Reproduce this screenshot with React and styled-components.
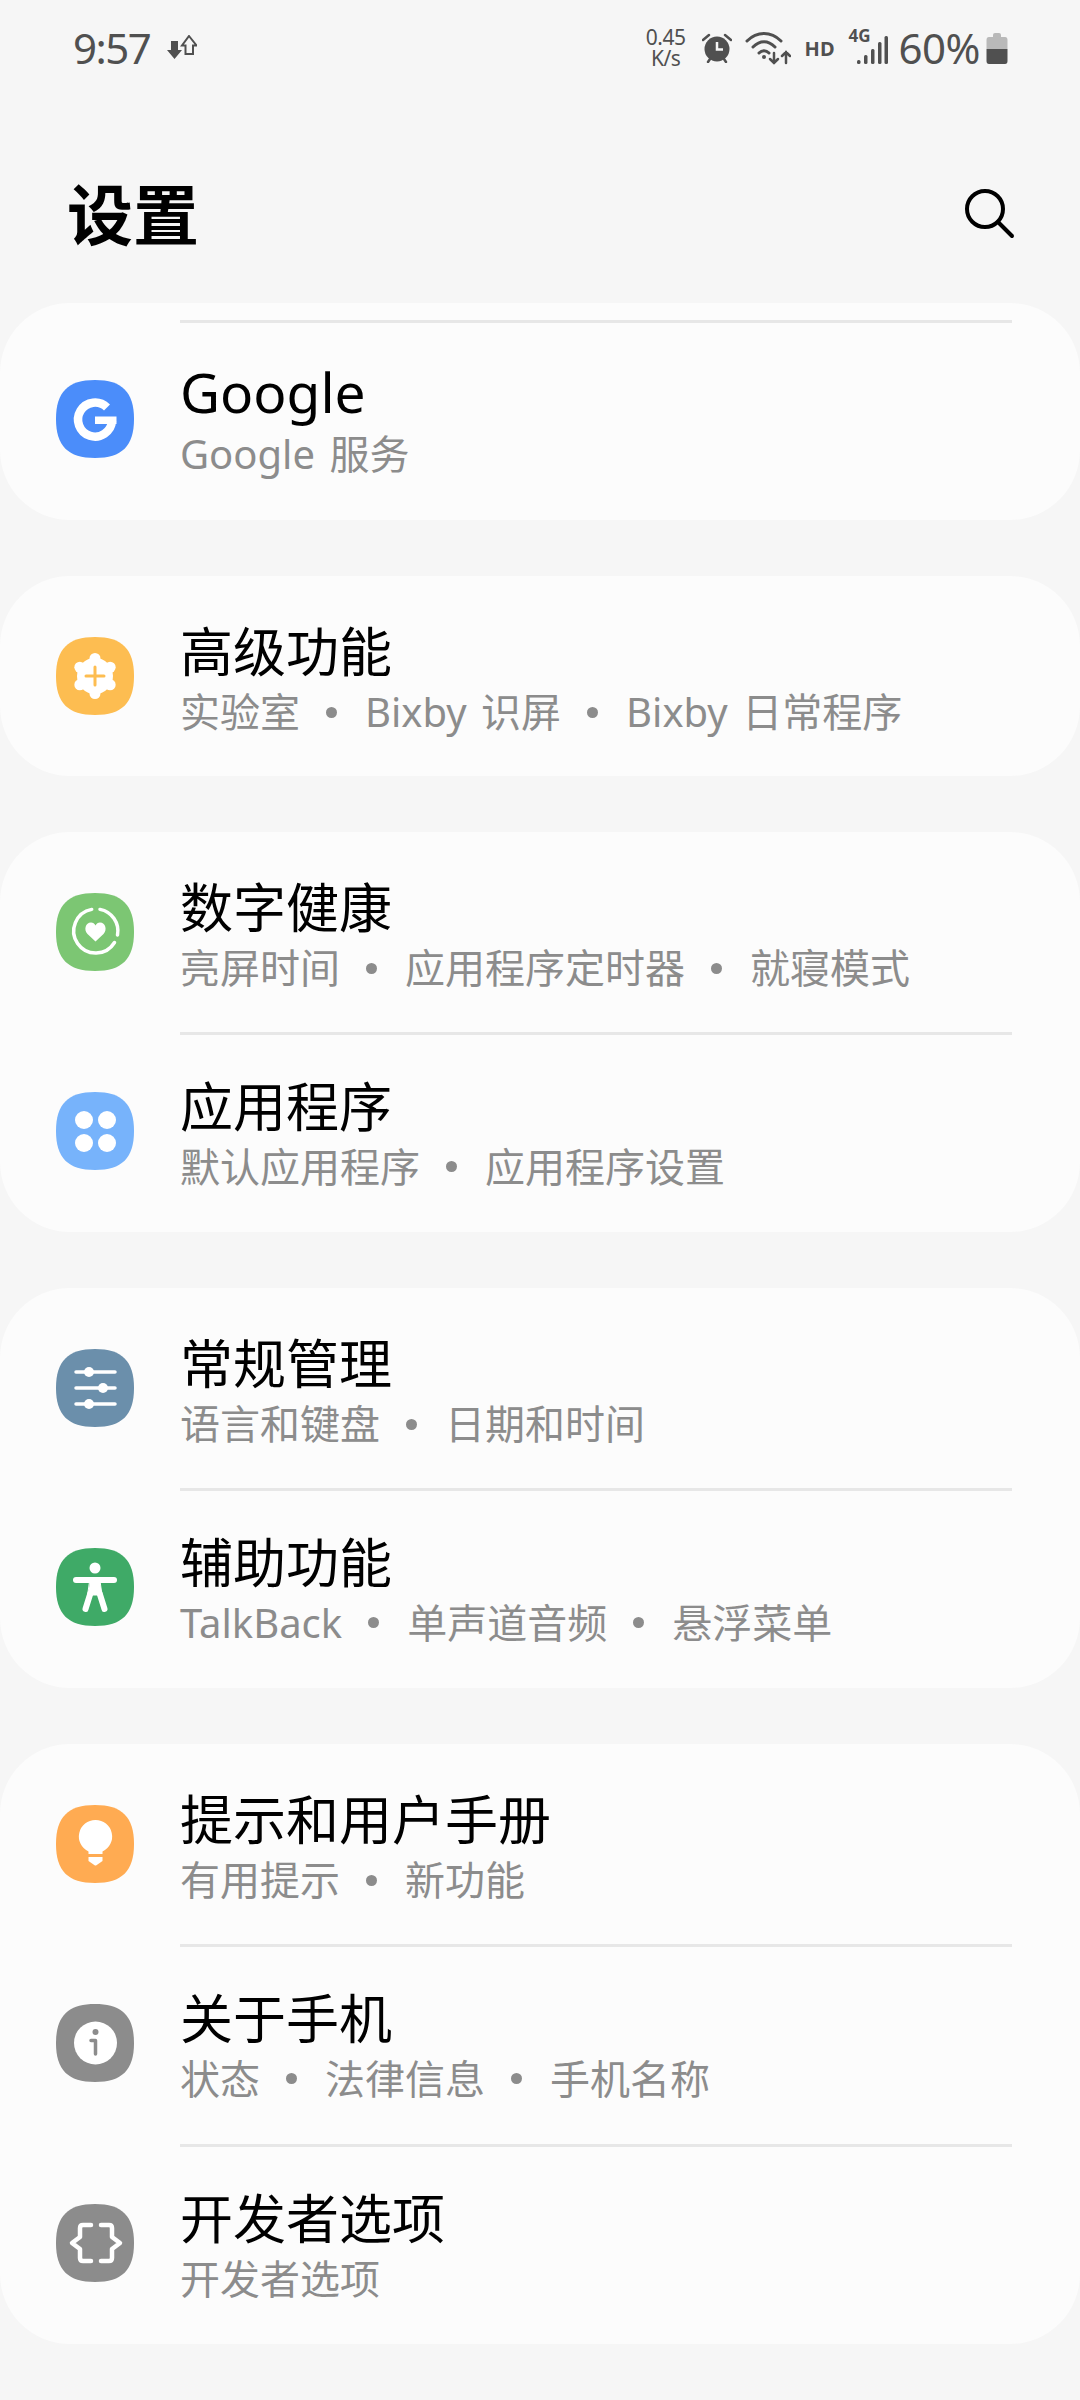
import React from "react";
import styled, { createGlobalStyle } from "styled-components";

const FONT = '"Noto Sans", "Noto Sans CJK SC", sans-serif';

const GlobalStyle = createGlobalStyle`
  html, body {
    margin: 0;
    padding: 0;
    background: #f6f6f6;
    font-family: ${FONT};
  }
`;

const Screen = styled.div`
  width: 1080px;
  height: 2400px;
  overflow: hidden;
  background: #f6f6f6;
`;

/* status bar */
const StatusBar = styled.div`
  height: 95px;
  padding: 0 72px 0 73px;
  box-sizing: border-box;
  display: flex;
  align-items: center;
  justify-content: space-between;
  color: #505050;
`;

const StatusGroup = styled.div`
  display: flex;
  align-items: center;
  gap: ${(p) => p.$gap || 0}px;
`;

const Time = styled.span`
  font-size: 42px;
  line-height: 48px;
  letter-spacing: -1.5px;
`;

const Speed = styled.span`
  font-size: 21px;
  line-height: 21px;
  text-align: center;
  letter-spacing: -0.5px;
  width: 44px;
  margin-right: 14px;
`;

const Hd = styled.span`
  font-size: 20px;
  font-weight: 700;
  line-height: 20px;
  margin: 2px 14px 0 14px;
`;

const Signal = styled.div`
  position: relative;
  width: 40px;
  height: 34px;
  margin-right: 10px;
`;

const FourG = styled.span`
  position: absolute;
  left: 0;
  top: -4px;
  font-size: 17px;
  font-weight: 700;
  line-height: 18px;
`;

const Percent = styled.span`
  font-size: 42px;
  line-height: 48px;
  letter-spacing: -0.5px;
  margin-right: 6px;
`;

/* page header */
const Header = styled.header`
  height: 208px;
  box-sizing: border-box;
  padding: 79px 64px 0 67px;
  display: flex;
  align-items: flex-start;
  justify-content: space-between;
`;

const Heading = styled.h1`
  margin: 0;
  font-size: 66px;
  line-height: 80px;
  font-weight: 700;
  color: #000;
`;

const SearchButton = styled.div`
  width: 52px;
  height: 52px;
  margin-top: 14px;
`;

/* settings list */
const List = styled.main`
  display: flex;
  flex-direction: column;
  gap: 56px;
`;

const Card = styled.section`
  background: #fcfcfc;
  border-radius: 70px;
  padding-top: ${(p) => (p.$topLine ? 17 : 0)}px;
`;

const Divider = styled.div`
  height: 3px;
  margin: 0 68px 0 180px;
  background: #e7e7e7;
`;

const Row = styled.div`
  height: ${(p) => (p.$first ? 200 : 197)}px;
  box-sizing: border-box;
  padding-left: 56px;
  padding-bottom: ${(p) => (p.$first ? 0 : 6)}px;
  display: flex;
  align-items: center;
  gap: 46px;
`;

const IconBox = styled.svg`
  width: 78px;
  height: 78px;
  flex: none;
`;

const RowText = styled.div`
  display: flex;
  flex-direction: column;
`;

const Title = styled.div`
  font-size: ${(p) => (p.$latin ? 55 : 53)}px;
  line-height: 62px;
  margin: ${(p) => (p.$latin ? "3px 0 6px" : "6px 0 4px")};
  color: #000;
`;

const Sub = styled.div`
  display: flex;
  align-items: center;
  font-size: 40px;
  line-height: 50px;
  word-spacing: 4px;
  color: #8c8c8c;
`;

const Dot = styled.span`
  width: 11px;
  height: 11px;
  border-radius: 50%;
  background: #8c8c8c;
  margin: 0 28px 0 26px;
`;

const SHAPE = "M39 0C66 0 78 12 78 39C78 66 66 78 39 78C12 78 0 66 0 39C0 12 12 0 39 0Z";

const Squircle = ({ color, children }) => (
  <IconBox viewBox="0 0 78 78">
    <path d={SHAPE} fill={color} />
    {children}
  </IconBox>
);

const GoogleGlyph = () => (
  <g>
    <path d="M51 27.5A17 17 0 1 0 56 41" fill="none" stroke="#fff" strokeWidth="8.5" />
    <rect x="39" y="36.5" width="21.5" height="7.5" fill="#fff" />
  </g>
);

const GearGlyph = () => (
  <g>
    <circle cx="39" cy="39" r="18" fill="#fff" />
    {[30, 90, 150, 210, 270, 330].map((a) => (
      <circle
        key={a}
        cx={39 + 17.5 * Math.cos((a * Math.PI) / 180)}
        cy={39 + 17.5 * Math.sin((a * Math.PI) / 180)}
        r="5.5"
        fill="#fff"
      />
    ))}
    <path d="M39 30V48M30 39H48" stroke="#fdbd51" strokeWidth="3" strokeLinecap="round" />
  </g>
);

const HeartGlyph = () => (
  <g fill="none" stroke="#fff" strokeWidth="3.5" strokeLinecap="round">
    <path d="M35.7 16.4A22 22 0 1 0 58.5 49.5" />
    <path d="M44 16.4A22 22 0 0 1 61.5 42" />
    <path
      d="M39.5 48.5L31.5 41C27.5 37 29.5 29.5 35 29.5C37 29.5 38.5 30.5 39.5 32.5C40.5 30.5 42 29.5 44 29.5C49.5 29.5 51.5 37 47.5 41Z"
      fill="#fff"
      stroke="none"
    />
  </g>
);

const AppsGlyph = () => (
  <g fill="#fff">
    <circle cx="28" cy="28" r="9" />
    <circle cx="51" cy="28" r="9" />
    <circle cx="28" cy="51" r="9" />
    <circle cx="51" cy="51" r="9" />
  </g>
);

const SlidersGlyph = () => (
  <g fill="#fff" stroke="#fff" strokeLinecap="round">
    <path d="M20 23H59M20 39H59M20 55H59" strokeWidth="3.5" />
    <circle cx="33" cy="23" r="5" strokeWidth="0" />
    <circle cx="47" cy="39" r="5" strokeWidth="0" />
    <circle cx="33" cy="55" r="5" strokeWidth="0" />
  </g>
);

const PersonGlyph = () => (
  <g fill="none" stroke="#fff" strokeLinecap="round" strokeLinejoin="round">
    <circle cx="39" cy="20" r="5.5" fill="#fff" stroke="none" />
    <path d="M20 32H58" strokeWidth="6" />
    <path d="M34 33H44L46 47H32Z" fill="#fff" strokeWidth="1" />
    <path d="M34.5 45L29.5 61M43.5 45L48.5 61" strokeWidth="6" />
  </g>
);

const BulbGlyph = () => (
  <g fill="#fff">
    <path d="M39.5 15A16.5 16.5 0 0 1 46.5 46.5V49H32.5V46.5A16.5 16.5 0 0 1 39.5 15Z" />
    <path d="M32.5 52H46.5V56L40 60.5H39L32.5 56Z" />
  </g>
);

const InfoGlyph = () => (
  <g>
    <circle cx="39.5" cy="39" r="21.5" fill="#fff" />
    <circle cx="39.5" cy="28" r="3" fill="#8c8c8c" />
    <path
      d="M35 36.5H39.5V50"
      fill="none"
      stroke="#8c8c8c"
      strokeWidth="3.5"
      strokeLinecap="round"
      strokeLinejoin="round"
    />
  </g>
);

const BracesGlyph = () => (
  <g fill="none" stroke="#fff" strokeWidth="4.5" strokeLinecap="round" strokeLinejoin="round">
    <path d="M35 21H27Q24 21 24 24V33L16 39L24 45V54Q24 57 27 57H35" />
    <path d="M45 21H53Q56 21 56 24V33L64 39L56 45V54Q56 57 53 57H45" />
  </g>
);

const groups = [
  {
    topLine: true,
    rows: [
      { color: "#4b8dfa", glyph: <GoogleGlyph />, title: "Google", latin: true, sub: ["Google 服务"] },
    ],
  },
  {
    rows: [
      {
        color: "#fdbd51",
        glyph: <GearGlyph />,
        title: "高级功能",
        sub: ["实验室", "Bixby 识屏", "Bixby 日常程序"],
      },
    ],
  },
  {
    rows: [
      {
        color: "#7cc673",
        glyph: <HeartGlyph />,
        title: "数字健康",
        sub: ["亮屏时间", "应用程序定时器", "就寝模式"],
      },
      {
        color: "#77b3fb",
        glyph: <AppsGlyph />,
        title: "应用程序",
        sub: ["默认应用程序", "应用程序设置"],
      },
    ],
  },
  {
    rows: [
      {
        color: "#6b8fab",
        glyph: <SlidersGlyph />,
        title: "常规管理",
        sub: ["语言和键盘", "日期和时间"],
      },
      {
        color: "#3faa67",
        glyph: <PersonGlyph />,
        title: "辅助功能",
        sub: ["TalkBack", "单声道音频", "悬浮菜单"],
      },
    ],
  },
  {
    rows: [
      {
        color: "#ffab52",
        glyph: <BulbGlyph />,
        title: "提示和用户手册",
        sub: ["有用提示", "新功能"],
      },
      {
        color: "#8c8c8c",
        glyph: <InfoGlyph />,
        title: "关于手机",
        sub: ["状态", "法律信息", "手机名称"],
      },
      {
        color: "#8c8c8c",
        glyph: <BracesGlyph />,
        title: "开发者选项",
        sub: ["开发者选项"],
      },
    ],
  },
];

const SettingRow = ({ item, first }) => (
  <Row $first={first}>
    <Squircle color={item.color}>{item.glyph}</Squircle>
    <RowText>
      <Title $latin={item.latin}>{item.title}</Title>
      <Sub>
        {item.sub.map((s, i) => (
          <React.Fragment key={s}>
            {i > 0 && <Dot />}
            <span>{s}</span>
          </React.Fragment>
        ))}
      </Sub>
    </RowText>
  </Row>
);

const App = () => {
  return (
    <Screen>
      <GlobalStyle />
      <StatusBar>
        <StatusGroup $gap={17}>
          <Time>9:57</Time>
          <svg width="30" height="26" viewBox="0 0 30 26" fill="#505050">
            <path d="M4 6H11V15H15L7.5 24L0 15H4Z" />
            <path d="M22 1L29.5 10.5H26V19H18.5V10.5H15Z" fill="none" stroke="#505050" strokeWidth="2" />
          </svg>
        </StatusGroup>
        <StatusGroup>
          <Speed>
            0.45
            <br />
            K/s
          </Speed>
          <svg width="30" height="30" viewBox="0 0 30 30" style={{ marginRight: 13 }}>
            <circle cx="15" cy="16" r="12.5" fill="#505050" />
            <path d="M15 9V16.5H21" fill="none" stroke="#f6f6f6" strokeWidth="2.5" />
            <path d="M1 7L7 2M29 7L23 2" stroke="#505050" strokeWidth="2.5" strokeLinecap="round" />
            <path d="M6 29L8 26M24 29L22 26" stroke="#505050" strokeWidth="2.5" strokeLinecap="round" />
          </svg>
          <svg width="46" height="34" viewBox="0 0 46 34" fill="none" stroke="#505050" strokeWidth="3" strokeLinecap="round">
            <path d="M2 10C12 0 26 0 36 10" />
            <path d="M8 16C15 9 23 9 30 16" />
            <path d="M14 22C17 19 21 19 24 22" />
            <circle cx="19" cy="26" r="2" fill="#505050" stroke="none" />
            <path d="M29 22V32M25 28L29 32L33 28" strokeWidth="2.5" />
            <path d="M41 32V21M37 25L41 21L45 25" strokeWidth="2.5" />
          </svg>
          <Hd>HD</Hd>
          <Signal>
            <FourG>4G</FourG>
            <svg width="40" height="34" viewBox="0 0 40 34" fill="#505050" style={{ display: "block" }}>
              <rect x="8" y="29" width="3.5" height="4" rx="1.5" />
              <rect x="15" y="24" width="3.5" height="9" rx="1.5" />
              <rect x="22" y="18" width="3.5" height="15" rx="1.5" />
              <rect x="29" y="11" width="3.5" height="22" rx="1.5" />
              <rect x="35.5" y="5" width="3.5" height="28" rx="1.5" />
            </svg>
          </Signal>
          <Percent>60%</Percent>
          <svg width="22" height="32" viewBox="0 0 22 32">
            <path d="M7 3Q7 1 9 1H13Q15 1 15 3V5H19Q21.5 5 21.5 8V17H0.5V8Q0.5 5 3 5H7Z" fill="#b9b9b9" />
            <path d="M0.5 17H21.5V29Q21.5 32 19 32H3Q0.5 32 0.5 29Z" fill="#505050" />
          </svg>
        </StatusGroup>
      </StatusBar>

      <Header>
        <Heading>设置</Heading>
        <SearchButton>
          <svg width="52" height="52" viewBox="0 0 52 52" fill="none" stroke="#000" strokeWidth="4" strokeLinecap="round">
            <circle cx="21" cy="21" r="18" />
            <path d="M34 34L48 48" />
          </svg>
        </SearchButton>
      </Header>

      <List>
        {groups.map((group) => (
          <Card key={group.rows[0].title} $topLine={group.topLine}>
            {group.topLine && <Divider />}
            {group.rows.map((item, i) => (
              <React.Fragment key={item.title}>
                {i > 0 && <Divider />}
                <SettingRow item={item} first={i === 0 && !group.topLine} />
              </React.Fragment>
            ))}
          </Card>
        ))}
      </List>
    </Screen>
  );
};

export default App;
